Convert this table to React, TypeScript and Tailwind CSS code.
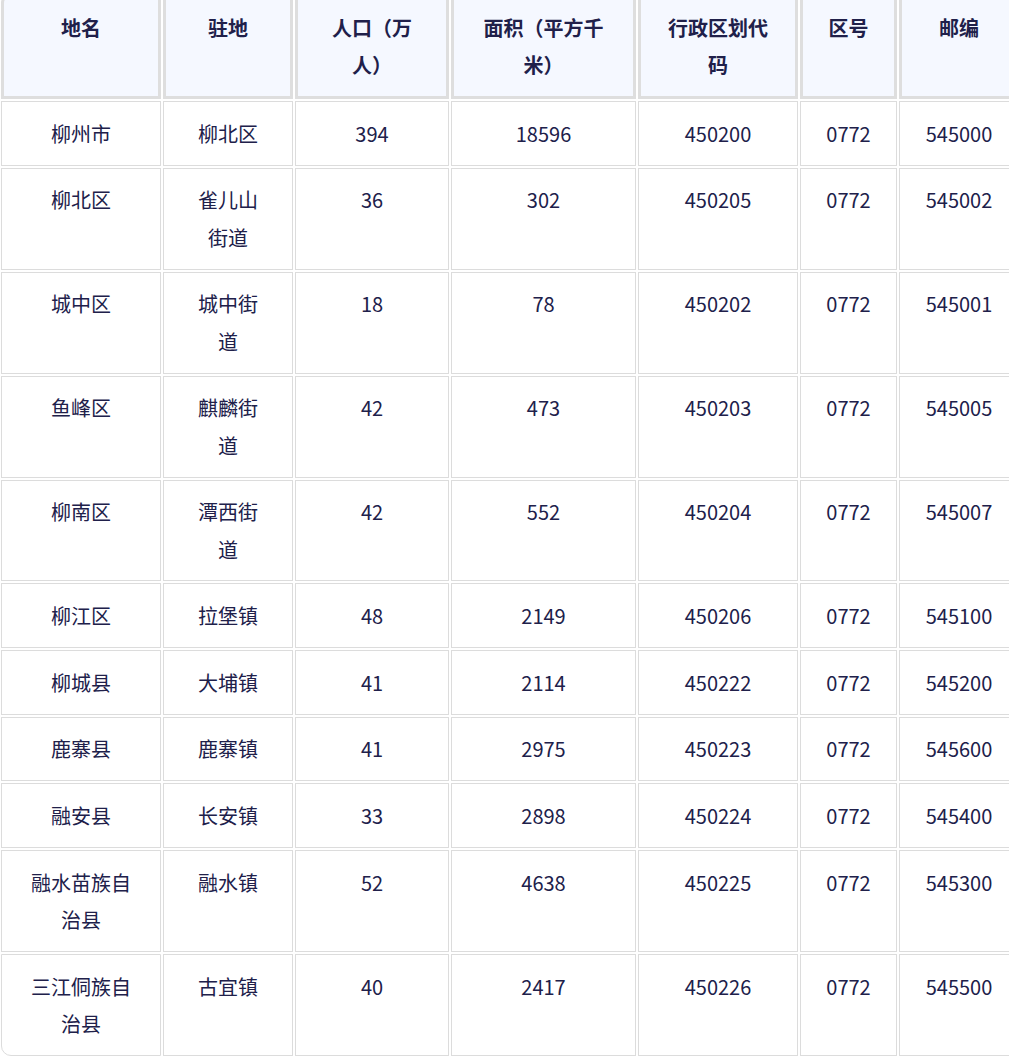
import React from 'react';

const headers = ['地名', '驻地', '人口（万\n人）', '面积（平方千\n米）', '行政区划代\n码', '区号', '邮编'];

const widths = ['w-[160px]', 'w-[130px]', 'w-[154px]', 'w-[185px]', 'w-[160px]', 'w-[97px]', 'w-[120px]'];

const rows: string[][] = [
  ['柳州市', '柳北区', '394', '18596', '450200', '0772', '545000'],
  ['柳北区', '雀儿山\n街道', '36', '302', '450205', '0772', '545002'],
  ['城中区', '城中街\n道', '18', '78', '450202', '0772', '545001'],
  ['鱼峰区', '麒麟街\n道', '42', '473', '450203', '0772', '545005'],
  ['柳南区', '潭西街\n道', '42', '552', '450204', '0772', '545007'],
  ['柳江区', '拉堡镇', '48', '2149', '450206', '0772', '545100'],
  ['柳城县', '大埔镇', '41', '2114', '450222', '0772', '545200'],
  ['鹿寨县', '鹿寨镇', '41', '2975', '450223', '0772', '545600'],
  ['融安县', '长安镇', '33', '2898', '450224', '0772', '545400'],
  ['融水苗族自\n治县', '融水镇', '52', '4638', '450225', '0772', '545300'],
  ['三江侗族自\n治县', '古宜镇', '40', '2417', '450226', '0772', '545500'],
];

export default function App() {
  return (
    <div className="h-screen w-full overflow-hidden bg-white font-['Noto_Sans_CJK_SC',sans-serif] text-[20px] leading-[37.33px] text-[#20204a]">
      <table className="-mt-[9px] -ml-[1px] w-[1022px] min-w-[1022px] table-fixed border-separate border-spacing-[2px]">
        <thead>
          <tr>
            {headers.map((h, i) => (
              <th
                key={i}
                className={`${widths[i]} ${i === 0 ? 'rounded-tl-[10px]' : ''} border-[3px] border-[#dedede] bg-[#f5f8ff] px-2 py-[12.67px] text-center align-top font-semibold whitespace-pre-line`}
              >
                {h}
              </th>
            ))}
          </tr>
        </thead>
        <tbody>
          {rows.map((row, r) => (
            <tr key={r}>
              {row.map((cell, c) => (
                <td
                  key={c}
                  className={`${r === rows.length - 1 && c === 0 ? 'rounded-bl-[10px]' : ''} border border-[#dcdcdc] px-2 py-[12.67px] text-center align-top whitespace-pre-line`}
                >
                  {cell}
                </td>
              ))}
            </tr>
          ))}
        </tbody>
      </table>
    </div>
  );
}
